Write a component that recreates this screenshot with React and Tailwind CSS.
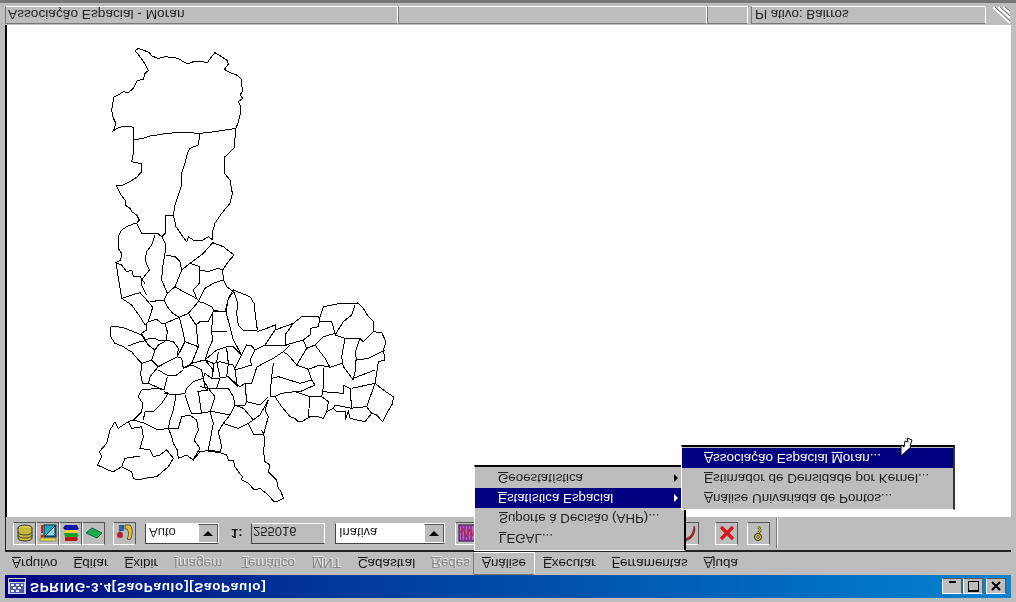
const FONT = "font-['Liberation_Sans',Arial,sans-serif]";

// outlines traced from the map, each group in its own 3x crop coordinates
const MAP = [
  {
    ox: 90,
    oy: 40,
    lines: [
      "135,32 145,25 160,30 178,38 185,48 205,55 225,50 245,52 265,55 280,65 293,72 310,65 335,65 352,68 365,50 375,38 395,50 412,62 415,72 403,88 420,98 440,105 455,118 455,135 458,152 450,165 458,175 445,185 452,200 450,225 445,245 438,265",
      "135,32 150,50 165,72 175,92 165,100 160,118 142,122 130,145 115,158 100,155 85,165 72,170 68,190 65,210 70,235 78,250 70,272 88,262 110,258 130,262",
      "130,262 130,300 160,295 180,288 200,285 230,280 275,277 330,280 375,275 438,265",
      "130,300 130,340 125,365 135,368 155,370 155,395 140,412 120,425 100,435 78,435 90,460 105,480 105,495 120,505 125,515 140,525 148,540 140,550",
      "330,280 325,315 300,325 292,340 285,370 275,400 275,435 265,465 255,495 250,525 225,528 225,545",
      "250,525 258,560 275,585 290,605 295,590 310,600 335,602 355,590 368,600",
      "438,265 432,325 405,350 403,400 420,420 427,460 420,490 395,520 375,550 368,575 368,600",
    ],
  },
  {
    ox: 90,
    oy: 220,
    lines: [
      "140,10 130,12 110,20 95,30 85,50 85,85 95,100 92,120 78,128 95,135 110,155 125,150 130,170 150,170 165,190",
      "140,10 155,40 205,42 215,50",
      "195,45 185,75 170,95 165,120 178,150 155,180 155,195 170,225",
      "225,0 225,40 215,50 228,75 225,100 218,140 215,180 232,220",
      "228,105 255,110 270,125 275,150 255,200 232,220",
      "275,150 300,130 330,140 328,190 310,210 322,240",
      "255,200 280,215 310,230 325,240",
      "300,130 340,100 368,68 400,80 432,105 415,125 398,150 400,180 410,200 430,215",
      "330,150 355,155 385,145 398,150",
      "400,180 370,190 345,205 330,235 325,245 345,250 365,260 372,272 405,275 415,235 432,215",
      "78,128 85,175 95,235 125,225 150,218 170,240 188,262 175,305 165,315 150,290 125,255 95,235",
      "222,240 180,245",
      "232,220 222,240 232,260 248,280 268,292 295,280 325,245",
      "268,292 225,310 215,310 200,298 175,305",
      "225,310 232,335 228,360 250,365 265,385 262,410",
      "170,310 170,330 155,340 165,358 195,355 205,360 228,360",
      "60,322 75,318 105,325 130,335 155,345 165,360 175,375 195,390 185,420 205,440",
      "60,322 62,350 75,370 100,380 115,390 125,395 135,408 155,430 152,465 158,490 175,490",
      "115,378 140,368 165,362",
      "195,390 205,375 225,365",
      "185,420 155,430",
      "205,440 180,470 175,490",
      "205,440 262,410 275,415 280,445",
      "205,450 230,465 260,465 280,450",
      "232,470 222,510 175,490",
      "222,510 200,505 155,510 145,530 158,550 155,575 130,600",
      "268,292 280,340 285,365 325,380",
      "295,280 318,315 325,380 305,430 280,445",
      "305,430 345,420",
      "285,365 262,410",
      "318,315 330,305",
      "222,520 258,525 285,520 290,505 310,485 340,475 345,505 355,510",
      "280,445 305,435 335,450 340,475",
      "222,515 235,520 215,550 190,575 165,575 160,600",
      "285,525 300,570 305,580 335,582 325,515",
      "320,515 355,510",
      "258,525 250,570 240,600 235,625 265,625 275,590 300,585 320,600 325,630 312,660 330,685 308,720",
      "235,625 205,630 165,610 130,600 115,605 125,625 155,620 160,650 150,685 180,690 190,710 210,705 230,690 250,715 235,740 200,770 165,775 145,780 130,775 125,755 95,740 70,755 55,750 22,735 35,710 28,695 50,670 60,630 75,605 85,625 115,605",
      "95,740 105,715 150,708",
      "235,625 245,650 250,670 262,690 265,715 290,705 310,720 330,695 345,693",
    ],
  },
  {
    ox: 200,
    oy: 280,
    lines: [
      "100,30 150,50 162,70 165,95 172,150 130,152 115,135 110,100 113,70 100,30 85,55 78,95 100,180 125,225 105,265",
      "78,95 40,95 25,125 0,125",
      "38,95 35,155 80,155",
      "35,155 38,180 25,210 15,240 50,210 80,200 100,200 125,225 140,195 155,198 165,210 150,240 155,255 105,270",
      "172,155 200,145 225,135 225,150 195,195 165,210",
      "225,150 280,130 255,165 258,195 215,195 195,195",
      "258,195 310,180 320,205 290,255 265,225 250,215",
      "280,130 305,110 355,110 360,115 355,140 330,145 330,165 310,180",
      "360,110 370,80 420,70 465,72 472,68 490,85 505,110 522,125 520,155 545,158 558,185 550,210 555,240 535,245 530,280 525,310 550,330 580,350 578,370 560,400 548,425 530,405 515,400 495,425 470,420 450,415 445,395 435,420 435,395 410,395 400,385 380,395 370,415 355,410 330,410 305,425 295,425 285,415 270,410 245,380 225,350 210,350",
      "360,125 395,125 405,160 370,170 345,195 375,235 390,262",
      "465,75 455,105 430,125 405,165 435,175 425,230 430,260 460,300",
      "435,175 480,175 490,185 520,155",
      "480,175 465,220 470,240 505,235 555,210",
      "465,240 465,275 460,295 525,270",
      "320,205 345,195",
      "290,255 325,268 360,255 390,262 425,250",
      "270,195 250,215 220,235 190,250 170,262 155,310 135,310 120,320 90,295",
      "220,250 215,290 210,350",
      "135,310 140,365 180,375 205,350",
      "215,295 235,290 300,310 335,300 325,270",
      "335,300 345,315 300,335 285,335 245,340 225,350",
      "285,335 330,350 365,350 370,320 370,265",
      "370,335 430,340 430,315 450,325 455,385 405,375 400,385",
      "455,325 525,310",
      "500,380 525,310",
      "450,385 500,380 515,400",
      "330,350 325,410",
      "365,350 385,365 380,395",
      "0,240 15,240 40,250 60,245 80,250 100,255",
      "55,215 50,245 60,290",
      "80,205 85,250 80,290",
      "15,240 40,270 35,295",
      "40,250 38,290",
      "100,255 105,270 112,318",
      "0,320 25,325",
      "10,295 15,280 35,295 55,295 85,290 115,320",
      "60,295 50,325 25,325 10,300",
      "25,325 45,350 30,395 0,400",
      "50,325 85,325 100,350 105,375 135,375 140,365",
      "105,375 90,405 40,395 30,395",
      "105,375 130,385 160,420 145,430 115,445 70,430 90,405",
      "160,420 180,405 205,360 195,390 205,410 190,465",
      "145,430 160,462 190,465",
      "70,430 55,455 65,500 60,515 25,510 40,430 30,395",
    ],
  },
  {
    ox: 205,
    oy: 430,
    lines: [
      "0,62 45,68 52,70 65,75 70,90 85,90 90,110 105,132 112,140 110,150 130,160 148,180 165,175 190,195 205,213 220,213 235,205 228,185 218,170 215,150 190,125 195,105 180,95 175,60 180,40 178,20 170,0",
    ],
  },
];

const traced = (line, ox, oy) =>
  line
    .split(" ")
    .map((p) => {
      const [x, y] = p.split(",").map(Number);
      return `${ox + x / 3},${oy + y / 3}`;
    })
    .join(" ");

const Bevel = ({ className = "", children }) => (
  <div
    className={`flex items-center justify-center border border-t-white border-l-white border-r-[#555] border-b-[#555] bg-[#bdbdbd] ${className}`}
  >
    {children}
  </div>
);

const Glyph = ({ children, size = 18 }) => (
  <svg width={size} height={size} viewBox="0 0 18 18" className="-scale-y-100">
    {children}
  </svg>
);

const ToolButton = ({ children, className = "" }) => (
  <Bevel className={`w-[23px] h-[23px] ${className}`}>{children}</Bevel>
);

const MenuLabel = ({ first, rest, off, className = "" }) => (
  <span
    className={`px-[8px] leading-[24px] ${
      off ? "text-[#868686] [text-shadow:1px_1px_0_#e8e8e8]" : "text-[#161616]"
    } ${className}`}
  >
    <span className="underline">{first}</span>
    {rest}
  </span>
);

const Combo = ({ label, className = "" }) => (
  <div
    className={`flex h-[21px] items-stretch border border-t-[#444] border-l-[#444] border-r-white border-b-white bg-white ${className}`}
  >
    <span className="flex-1 pl-[3px] text-[13px] leading-[22px] text-[#222]">{label}</span>
    <Bevel className="w-[20px]">
      <span className="h-0 w-0 border-x-[5px] border-t-[5px] border-x-transparent border-t-black" />
    </Bevel>
  </div>
);

const Arrow = ({ light }) => (
  <span
    className={`absolute right-[6px] top-[6px] h-0 w-0 border-y-[4px] border-l-[4px] border-y-transparent ${
      light ? "border-l-white" : "border-l-black"
    }`}
  />
);

const PopRow = ({ first, rest, mid, midLead, active, arrow, pad }) => (
  <div
    className={`relative h-[20px] ${pad} leading-[20px] ${
      active ? "bg-[#000080] text-white" : "text-[#1c1c1c]"
    }`}
  >
    <span className="underline">{first}</span>
    {rest}
    {mid && (
      <>
        {midLead}
        <span className="underline">{mid[0]}</span>
        {mid[1]}
      </>
    )}
    {arrow && <Arrow light={active} />}
  </div>
);

function StatusCell({ className = "", children }) {
  return (
    <div
      className={`h-[18px] border border-t-[#777] border-l-[#777] border-r-white border-b-white pl-[2px] leading-[18px] ${className}`}
    >
      {children}
    </div>
  );
}

export default function App() {
  return (
    <div
      className={`${FONT} relative flex h-[602px] w-[1016px] -scale-y-100 flex-col overflow-hidden bg-[#bdbdbd] pt-[4px]`}
    >
      {/* title bar */}
      <div className="mx-[5px] flex h-[23px] shrink-0 items-center bg-gradient-to-r from-[#000080] to-[#1084d0] pl-[3px] pr-[5px]">
        <svg width="18" height="16" viewBox="0 0 18 16" className="-scale-y-100">
          <rect width="18" height="16" fill="#c8d0e8" />
          <rect x="1" y="1" width="16" height="3" fill="#10108a" />
          <path d="M2 5h14v10H2z" fill="#4a5aa8" />
          <path d="M3 6h3v2H3zm5 0h3v2H8zm5 0h2v2h-2zM5 9h3v2H5zm5 0h3v2h-3zM3 12h3v2H3zm5 0h3v2H8z" fill="#e8ecf8" />
        </svg>
        <span className="ml-[4px] text-[13.5px] font-bold tracking-[0.68px] text-white">
          SPRING-3.4[SaoPaulo][SaoPaulo]
        </span>
        <div className="ml-auto flex">
          <Bevel className="h-[16px] w-[20px] items-end pb-[2px]">
            <span className="h-[2px] w-[7px] bg-black" />
          </Bevel>
          <Bevel className="ml-[1px] h-[16px] w-[20px]">
            <span className="h-[11px] w-[11px] border border-t-2 border-black" />
          </Bevel>
          <Bevel className="ml-[3px] h-[16px] w-[20px]">
            <svg width="10" height="10" viewBox="0 0 10 10">
              <path d="M1 1l8 8M9 1l-8 8" stroke="#000" strokeWidth="2" />
            </svg>
          </Bevel>
        </div>
      </div>

      {/* menu bar */}
      <div className="flex h-[23px] shrink-0 items-center pl-[4px] text-[13.4px]">
        <MenuLabel first="A" rest="rquivo" />
        <MenuLabel first="E" rest="ditar" />
        <MenuLabel first="E" rest="xibir" />
        <MenuLabel first="I" rest="magem" off />
        <MenuLabel first="T" rest="emático" off className="ml-[3px]" />
        <MenuLabel first="M" rest="NT" off className="ml-[1px]" />
        <MenuLabel first="C" rest="adastral" className="ml-[1px]" />
        <MenuLabel first="R" rest="edes" off className="-mr-[5px]" />
        <span className="flex h-[23px] items-center border border-t-[#777] border-l-[#777] border-r-white border-b-white">
          <MenuLabel first="A" rest="nálise" />
        </span>
        <MenuLabel first="E" rest="xecutar" />
        <MenuLabel first="F" rest="erramentas" />
        <MenuLabel first="A" rest="juda" />
      </div>

      {/* toolbar */}
      <div className="mx-[5px] flex h-[35px] shrink-0 items-center border-t-2 border-l border-t-[#222] border-l-[#222] pl-[7px]">
        <ToolButton>
          <Glyph>
            <ellipse cx="9" cy="4" rx="7" ry="3" fill="#d8c848" stroke="#333" />
            <path d="M2 4v10c0 4 14 4 14 0V4" fill="#c8b838" stroke="#333" />
            <path d="M2 8c0 4 14 4 14 0M2 11c0 4 14 4 14 0" fill="none" stroke="#444" />
          </Glyph>
        </ToolButton>
        <ToolButton>
          <Glyph>
            <rect x="5" y="1" width="12" height="12" fill="#20a8c0" stroke="#123" />
            <path d="M6 12L16 2v10z" fill="#8fd8e8" stroke="#124" />
            <path d="M3 1v8" stroke="#d02020" strokeWidth="2" />
            <circle cx="3" cy="12" r="1.5" fill="#d02020" />
            <rect x="1" y="14" width="16" height="3" fill="#e8d850" stroke="#654" strokeWidth=".5" />
          </Glyph>
        </ToolButton>
        <ToolButton>
          <Glyph>
            <path d="M3 1h12l2 4-2 1H3L1 4z" fill="#1818a8" />
            <path d="M3 6h12l1 3H2z" fill="#e8d040" />
            <path d="M2 9h13l2 3-2 1H3z" fill="#18a030" />
            <path d="M3 13h12l1 3-2 1H3z" fill="#b81818" />
          </Glyph>
        </ToolButton>
        <ToolButton>
          <Glyph>
            <path d="M1 9l6-5 10 5-5 5z" fill="#18b048" stroke="#164" />
          </Glyph>
        </ToolButton>
        <ToolButton className="ml-[8px]">
          <Glyph>
            <path d="M9 1h5c3 3 3 10 0 15l-3-1c2-4 2-7 0-10H9z" fill="#e0c030" stroke="#654" />
            <rect x="3" y="1" width="5" height="6" fill="#3060a0" />
            <circle cx="4" cy="11" r="3" fill="#c01830" />
            <path d="M4 7v2" stroke="#333" />
          </Glyph>
        </ToolButton>
        <Combo label="Auto" className="ml-[9px] w-[74px]" />
        <span className="ml-[12px] w-[20px] text-[13px] font-bold text-[#111]">1:</span>
        <div className="flex h-[21px] w-[74px] items-center border border-t-[#444] border-l-[#444] border-r-white border-b-white pl-[1px] pt-[4px] text-[13px] text-[#222]">
          255016
        </div>
        <Combo label="Inativa" className="ml-[10px] w-[110px]" />
        <ToolButton className="ml-[10px]">
          <Glyph>
            <rect x="1" y="1" width="16" height="16" fill="#c060b8" stroke="#204" />
            <path d="M4 2v14M7 2v14M10 2v14M13 2v14" stroke="#402080" />
            <path d="M2 9l3-5 3 9 3-8 3 7 2-4" fill="none" stroke="#d01830" />
          </Glyph>
        </ToolButton>
        <div className="w-[205px]" />
        <ToolButton className="-ml-[7px]">
          <Glyph>
            <path d="M3 15c8 0 11-5 12-13l1 2c0 8-5 13-12 13z" fill="#c81818" stroke="#411" strokeWidth=".5" />
          </Glyph>
        </ToolButton>
        <ToolButton className="ml-[16px]">
          <svg width="18" height="18" viewBox="0 0 18 18">
            <path d="M3 3l12 12M15 3L3 15" stroke="#d81820" strokeWidth="3.5" />
          </svg>
        </ToolButton>
        <ToolButton className="ml-[9px]">
          <Glyph>
            <circle cx="8" cy="13" r="3.5" fill="#e8d830" stroke="#222" />
            <circle cx="8" cy="13" r="1.5" fill="#bdbdbd" stroke="#222" strokeWidth=".6" />
            <path d="M8 9c3-2 3-4 0-6" fill="none" stroke="#222" strokeWidth="2.4" />
            <path d="M8 9c3-2 3-4 0-6" fill="none" stroke="#e8d830" strokeWidth="1.2" />
          </Glyph>
        </ToolButton>
        <div className="ml-[6px] h-[30px] border-l border-r border-l-[#777] border-r-white" />
      </div>

      {/* map canvas */}
      <div className="mx-[5px] h-[492px] shrink-0 border-l-2 border-r-2 border-l-black border-r-white bg-white">
        <svg viewBox="7 25 1002 492" className="block h-full w-full -scale-y-100">
          {MAP.map((g) =>
            g.lines.map((line, i) => (
              <polyline
                key={`${g.ox}-${i}`}
                points={traced(line, g.ox, g.oy)}
                fill="none"
                stroke="#000"
                strokeWidth="1"
                shapeRendering="crispEdges"
              />
            ))
          )}
        </svg>
      </div>

      {/* status bar */}
      <div className="flex h-[25px] shrink-0 items-start border-b-[3px] border-b-[#777] px-[5px] pt-[1px] text-[#222]">
        <StatusCell className="w-[393px] text-[13.7px]">Associação Espacial - Moran</StatusCell>
        <StatusCell className="w-[309px]" />
        <StatusCell className="w-[41px]" />
        <StatusCell className="ml-[3px] w-[235px] pl-[3px] text-[13.4px]">Pl ativo: Bairros</StatusCell>
        <svg width="24" height="18" viewBox="0 0 24 18" className="ml-auto -scale-y-100">
          <path d="M6 1l17 16M11 1l12 11M16 1l7 6" stroke="#fff" strokeWidth="2" />
          <path d="M8 1l15 14M13 1l10 9M18 1l5 4" stroke="#777" />
        </svg>
      </div>

      {/* analysis menu */}
      <div className="absolute left-[474px] top-[51px] h-[86px] w-[212px] border border-t-white border-l-white border-r-2 border-r-black border-b-2 border-b-black bg-[#bdbdbd] pt-[2px] text-[13.3px]">
        <PopRow first="L" rest="EGAL..." pad="pl-[24px]" />
        <PopRow first="S" rest="uporte à Decisão (AHP)..." pad="pl-[24px]" />
        <PopRow first="E" rest="statística Espacial" active arrow pad="pl-[23px]" />
        <PopRow first="G" rest="eoestatística" arrow pad="pl-[23px]" />
      </div>

      {/* spatial statistics submenu */}
      <div className="absolute left-[681px] top-[92px] h-[65px] w-[274px] border border-t-white border-l-white border-r-2 border-r-[#333] border-b-2 border-b-black bg-[#bdbdbd] pt-[1px] text-[13.5px]">
        <PopRow first="A" rest="nálise Univariada de Pontos..." pad="pl-[22px]" />
        <PopRow first="E" rest="stimador de Densidade por Kernel..." pad="pl-[22px]" />
        <PopRow first="A" rest="ssociação Espacial " mid={["M", "oran..."]} active pad="pl-[22px]" />
      </div>

      {/* mouse cursor */}
      <svg width="14" height="20" viewBox="0 0 14 20" className="absolute left-[900px] top-[145px] -scale-y-100">
        <path d="M1 19V8l3 2 1-6 3 1-1-4 5 2-2 6h2z" fill="#fff" stroke="#000" />
      </svg>
    </div>
  );
}
